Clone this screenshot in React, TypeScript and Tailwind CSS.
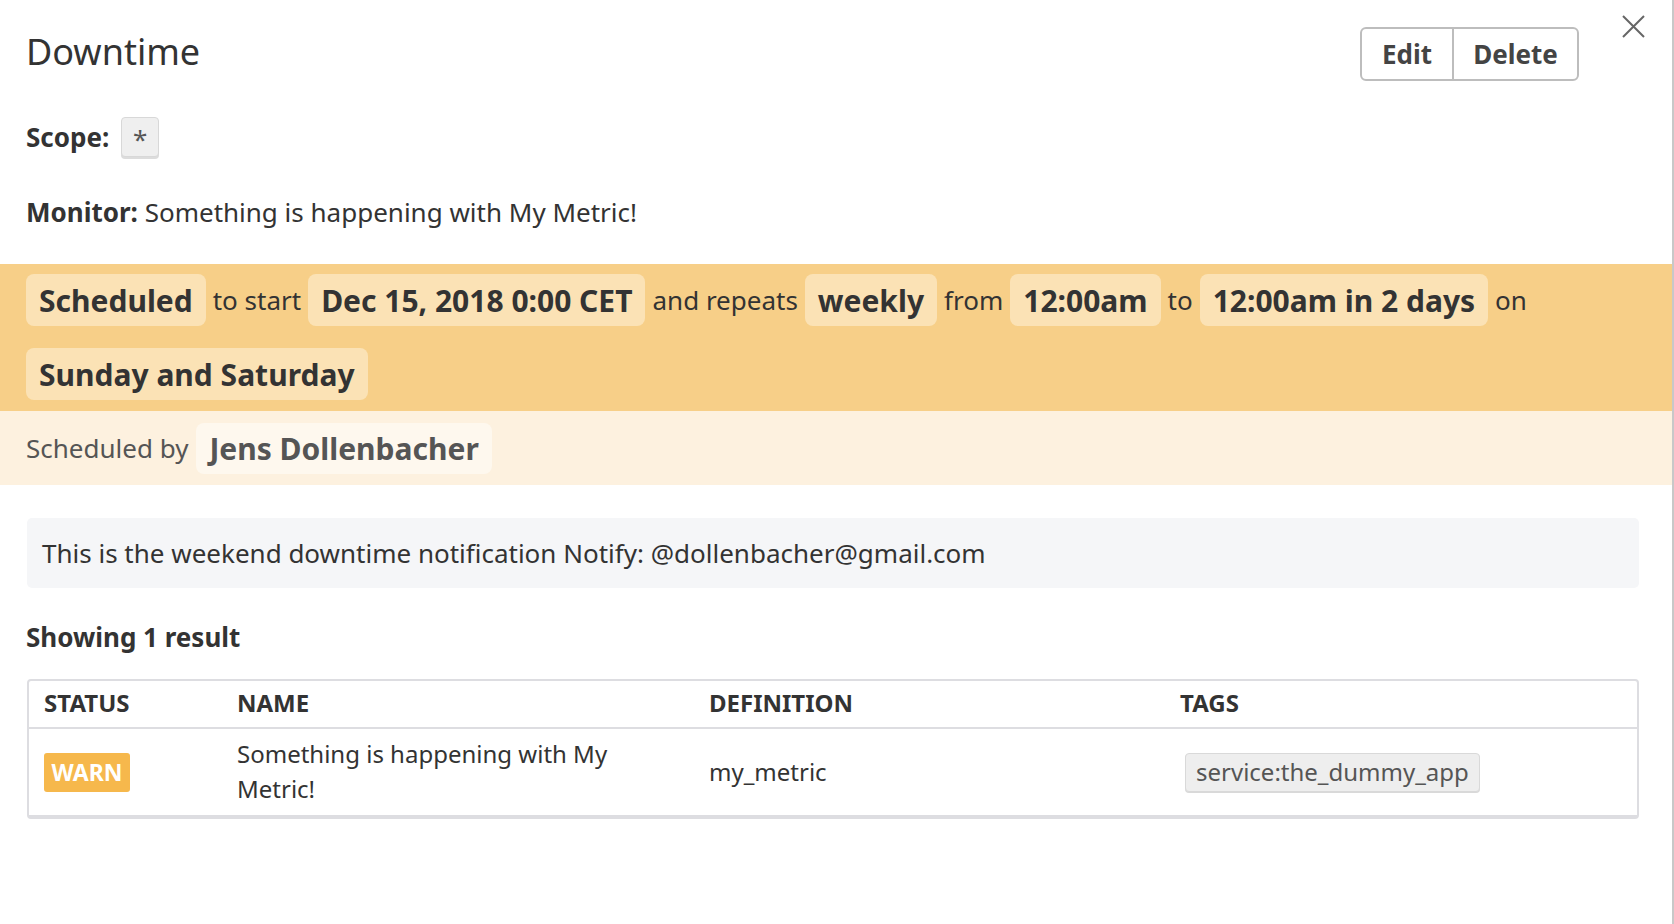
import React from "react";

function Pill({ children }: { children: React.ReactNode }) {
  return (
    <span className="inline-flex h-[52px] items-center rounded-[8px] bg-[#fbe2b5] px-[13px] text-[30px] font-bold text-[#333]">
      {children}
    </span>
  );
}

function Word({ children }: { children: React.ReactNode }) {
  return <span className="text-[26px] text-[#333]">{children}</span>;
}

export default function App() {
  return (
    <div
      className="relative h-[924px] w-full overflow-hidden border-r-2 border-[#c8c8c8] bg-white text-[#333]"
      style={{ fontFamily: '"Noto Sans", "Open Sans", sans-serif' }}
    >
      {/* close */}
      <button className="absolute right-[27px] top-[15px] h-[23px] w-[23px] text-[#666]" aria-label="Close">
        <svg viewBox="0 0 23 23" width="23" height="23" fill="none" stroke="#666" strokeWidth="2">
          <path d="M1 1 L22 22 M22 1 L1 22" />
        </svg>
      </button>

      {/* header */}
      <div className="flex items-center justify-between pl-[26px] pr-[93px] pt-[27px]">
        <h1 className="-mt-[4px] text-[36px] font-normal leading-[54px] text-[#333]">Downtime</h1>
        <div className="flex h-[54px] overflow-hidden rounded-[6px] border-2 border-[#bdbdbd]">
          <button className="w-[92px] border-r-2 border-[#bdbdbd] text-[26px] font-bold text-[#444]">Edit</button>
          <button className="w-[123px] text-[26px] font-bold text-[#444]">Delete</button>
        </div>
      </div>

      {/* scope */}
      <div className="mt-[36px] flex items-center gap-[12px] pl-[26px]">
        <span className="text-[26px] font-bold">Scope:</span>
        <span className="flex h-[40px] w-[38px] items-start justify-center rounded-[4px] border border-[#d8d8d8] bg-[#efefef] pt-[2px] text-[26px] text-[#555] shadow-[0_2px_0_#dcdcdc]">
          *
        </span>
      </div>

      {/* monitor */}
      <div className="mt-[37px] pl-[26px] text-[26px] leading-[36px]">
        <span className="font-bold">Monitor:</span> Something is happening with My Metric!
      </div>

      {/* schedule band */}
      <div className="mt-[34px] flex flex-wrap items-center gap-x-[7px] gap-y-[22px] bg-[#f7cf88] px-[26px] pb-[11px] pt-[10px]">
        <Pill>Scheduled</Pill>
        <Word>to start</Word>
        <Pill>Dec 15, 2018 0:00 CET</Pill>
        <Word>and repeats</Word>
        <Pill>weekly</Pill>
        <Word>from</Word>
        <Pill>12:00am</Pill>
        <Word>to</Word>
        <Pill>12:00am in 2 days</Pill>
        <Word>on</Word>
        <Pill>Sunday and Saturday</Pill>
      </div>

      {/* scheduled by */}
      <div className="flex h-[74px] items-center gap-[8px] bg-[#fdf1df] px-[26px]">
        <span className="text-[26px] text-[#555]">Scheduled by</span>
        <span className="inline-flex h-[51px] items-center rounded-[8px] bg-[#fef8ee] px-[13px] text-[30px] font-bold text-[#555]">
          Jens Dollenbacher
        </span>
      </div>

      {/* message */}
      <div className="ml-[27px] mr-[33px] mt-[33px] flex h-[70px] items-center rounded-[5px] bg-[#f5f6f8] px-[15px] text-[26px] text-[#333]">
        This is the weekend downtime notification Notify: @dollenbacher@gmail.com
      </div>

      {/* results */}
      <div className="mt-[32px] pl-[26px] text-[26px] font-bold leading-[34px]">Showing 1 result</div>

      <div className="ml-[27px] mr-[33px] mt-[25px] rounded-[4px] border-2 border-b-4 border-[#dddde1]">
        <div className="grid h-[48px] grid-cols-[193px_472px_471px_1fr] items-center border-b-2 border-[#dddde1] text-[24px] font-bold text-[#333]">
          <div className="px-[15px] pb-[2px]">STATUS</div>
          <div className="px-[15px] pb-[2px]">NAME</div>
          <div className="px-[15px] pb-[2px]">DEFINITION</div>
          <div className="px-[15px] pb-[2px]">TAGS</div>
        </div>
        <div className="grid h-[86px] grid-cols-[193px_472px_471px_1fr] items-center text-[24px] text-[#333]">
          <div className="px-[15px]">
            <span className="inline-flex h-[39px] w-[86px] items-center justify-center rounded-[3px] bg-[#f6b84c] text-[23px] font-bold text-white">
              WARN
            </span>
          </div>
          <div className="px-[15px] pb-[2px] leading-[35px]">Something is happening with My Metric!</div>
          <div className="px-[15px]">my_metric</div>
          <div className="px-[20px]">
            <span className="inline-flex h-[39px] items-center rounded-[4px] border border-[#d9d9d9] bg-[#eeeeee] px-[10px] text-[24px] text-[#555] shadow-[0_1px_0_#d9d9d9]">
              service:the_dummy_app
            </span>
          </div>
        </div>
      </div>
    </div>
  );
}
